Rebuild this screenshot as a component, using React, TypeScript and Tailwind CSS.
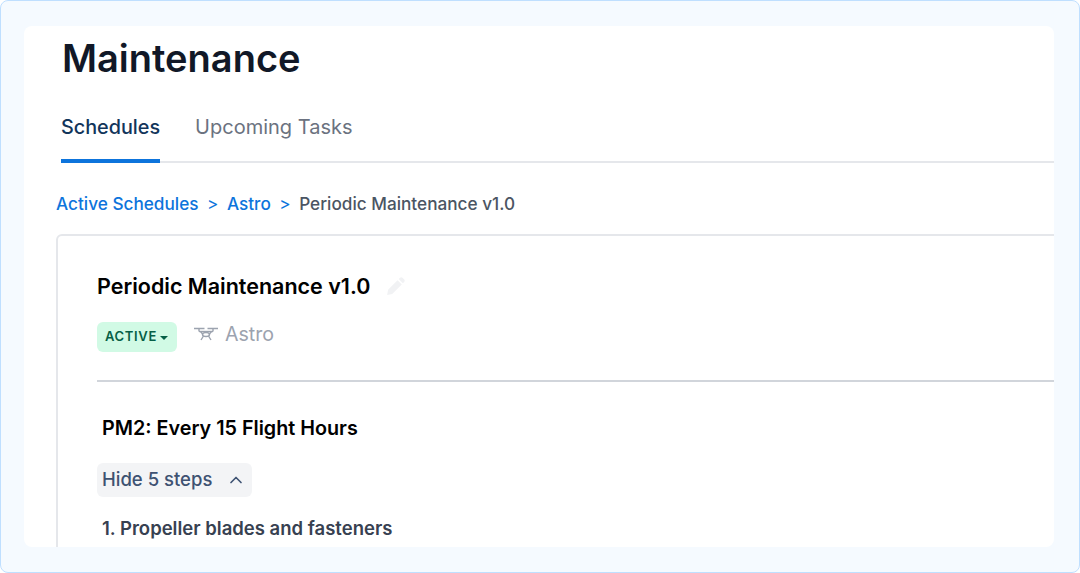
import { ChevronUp } from "lucide-react";

function DroneIcon() {
  return (
    <svg width="24" height="14" viewBox="0 0 24 14" fill="none" stroke="currentColor" strokeWidth="1.4" className="text-[#9ca3af]">
      <path d="M0 1.5h10.5M13.5 1.5h10.5" />
      <path d="M5 1.5v3M19 1.5v3" />
      <path d="M5 4.5h14" />
      <ellipse cx="12" cy="7.5" rx="3.5" ry="2" />
      <path d="M6.5 4.5l2.5 3M17.5 4.5l-2.5 3" />
      <path d="M9.5 9l-2.5 4M14.5 9l2.5 4" />
    </svg>
  );
}

function PencilIcon() {
  return (
    <svg width="20" height="20" viewBox="0 0 18 18" fill="#f1f2f4">
      <path d="M12.6 1.6a1.6 1.6 0 0 1 2.2 0l1.6 1.6a1.6 1.6 0 0 1 0 2.2l-1.2 1.2-3.8-3.8z" />
      <path d="M10.4 3.8l3.8 3.8-8.6 8.6-4.6 1 .9-4.8z" />
    </svg>
  );
}

export default function App() {
  return (
    <div className="h-[573px] w-[1080px] rounded-lg border border-[#bfdfff] bg-[#f5faff] pt-[25px] pr-[25px] pb-[25px] pl-[23px] font-['Inter',sans-serif]">
      <div className="h-[521px] overflow-hidden rounded-lg bg-white">
        <div className="pl-[38px] pt-[8px]">
          <h1 className="text-[38px] leading-[48px] font-semibold text-[#111827]">Maintenance</h1>
        </div>

        {/* Tabs */}
        <div className="mt-[31px] ml-[37px] flex gap-[35px] border-b-2 border-[#e5e7eb] text-[20px] leading-[28px]">
          <div className="-mb-[2px] border-b-4 border-[#0d74dc] pb-[18px] text-[19.8px] font-medium text-[#12355b]">Schedules</div>
          <div className="text-[#6b7280]">Upcoming Tasks</div>
        </div>

        {/* Breadcrumb */}
        <div className="mt-[29px] ml-[32px] flex items-center text-[17.2px] leading-[24px] font-medium">
          <span className="text-[#0d74dc]">Active Schedules</span>
          <span className="mx-[8.5px] font-normal text-[#0d74dc]">&gt;</span>
          <span className="text-[#0d74dc]">Astro</span>
          <span className="mx-[8.5px] font-normal text-[#0d74dc]">&gt;</span>
          <span className="text-[#4b5563]">Periodic Maintenance v1.0</span>
        </div>

        {/* Schedule card */}
        <div className="mt-[18px] ml-[32px] -mr-[8px] h-[340px] rounded-md border-2 border-[#e5e7eb] pt-[36px] pl-[39px]">
          <div className="flex items-center gap-[16px]">
            <h2 className="text-[21.5px] leading-[28px] font-semibold text-black">Periodic Maintenance v1.0</h2>
            <PencilIcon />
          </div>

          <div className="mt-[22px] flex items-start gap-[17px]">
            <div className="flex h-[30px] items-center gap-[3px] rounded-md bg-[#d1fae5] pr-[9px] pl-[8px] text-[13px] font-semibold tracking-[0.65px] text-[#065f46]">
              ACTIVE
              <span className="mt-[1px] h-0 w-0 border-x-[4px] border-t-[4px] border-x-transparent border-t-[#065f46]" />
            </div>
            <div className="-mt-[2px] flex items-center gap-[7px] text-[19.6px] leading-[28px] text-[#9ca3af]">
              <DroneIcon />
              Astro
            </div>
          </div>

          <div className="mt-[28px] h-[2px] bg-[#d1d5db]" />

          <h3 className="mt-[32px] ml-[5px] text-[19.75px] leading-[28px] font-semibold text-black">PM2: Every 15 Flight Hours</h3>

          <div className="mt-[21px] flex h-[34px] w-[155px] items-center rounded-md bg-[#f3f4f6] pl-[5px] text-[18.5px] font-medium text-[#3e5272]">
            Hide 5 steps
            <ChevronUp className="ml-[14px] text-[#3e5272]" size={20} strokeWidth={2} />
          </div>

          <div className="mt-[17px] ml-[5px] text-[18.5px] leading-[28px] font-semibold text-[#374151]">1. Propeller blades and fasteners</div>
        </div>
      </div>
    </div>
  );
}
